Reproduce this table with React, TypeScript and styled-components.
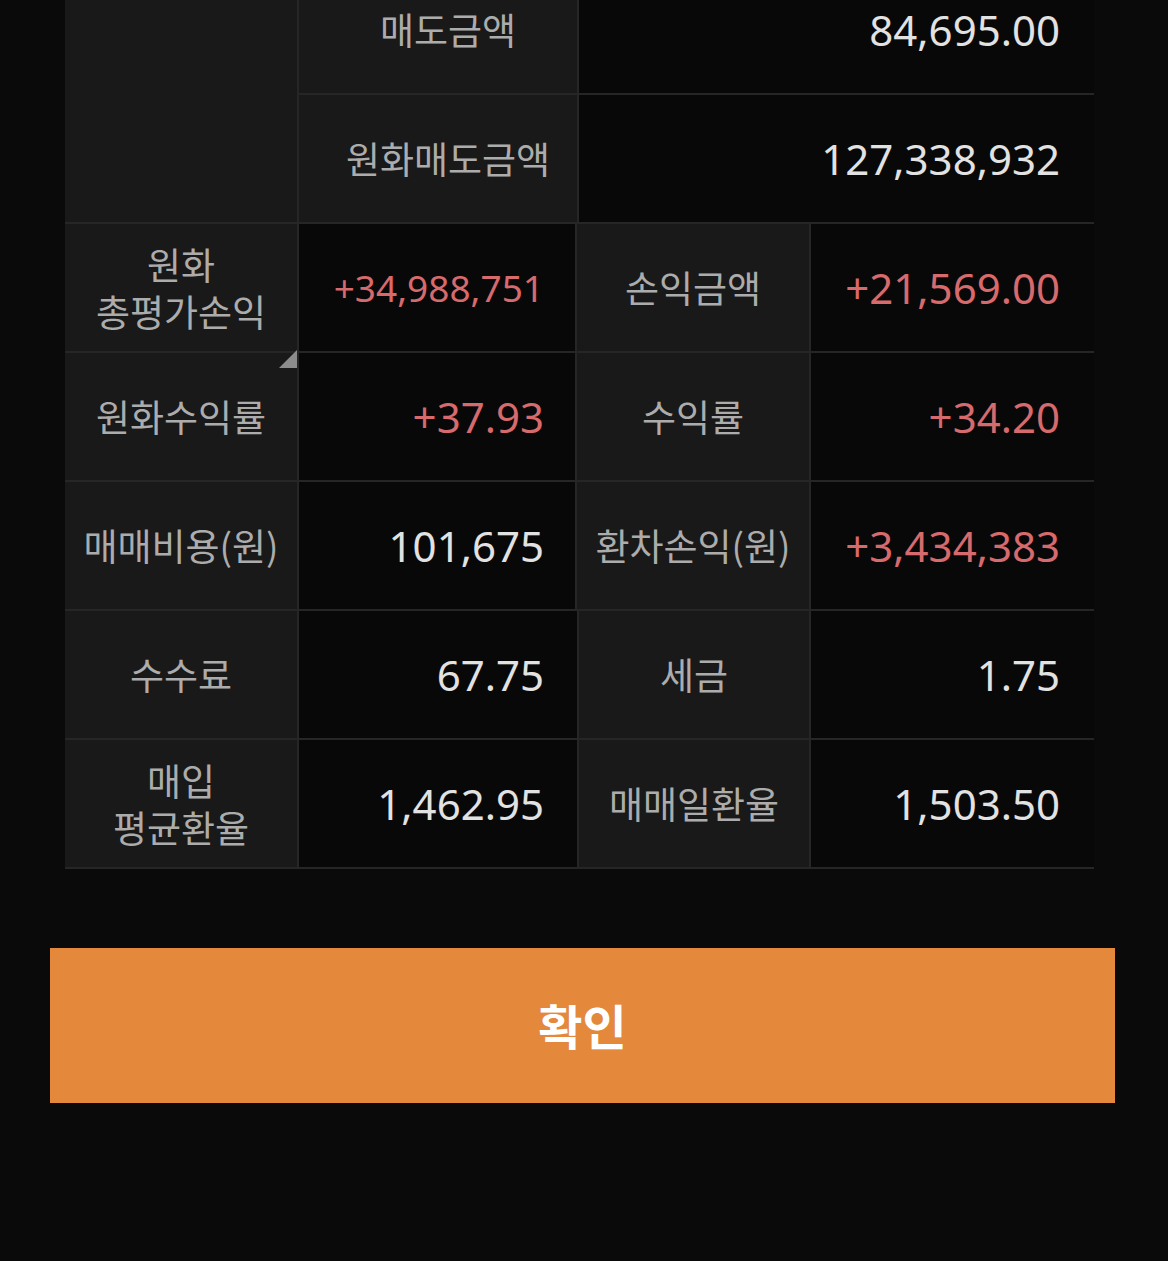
import React from "react";
import styled, { createGlobalStyle } from "styled-components";

const GlobalStyle = createGlobalStyle`
  html, body {
    margin: 0;
    padding: 0;
    background: #0a0a0a;
  }
  body {
    font-family: "Noto Sans CJK KR", "Noto Sans", sans-serif;
  }
`;

const Page = styled.div`
  width: 1168px;
  height: 1261px;
  overflow: hidden;
  background: #0a0a0a;
  display: flex;
  flex-direction: column;
`;

const Table = styled.div`
  margin: -34px 74px 0 65px;
  display: flex;
  flex-direction: column;
  gap: 2px;
  padding-bottom: 2px;
  background: #262626;
`;

const TopBlock = styled.div`
  display: grid;
  grid-template-columns: 232px 278px 1fr;
  grid-template-rows: 127px 127px;
  gap: 2px;
`;

const Row = styled.div<{ $cols: string }>`
  display: grid;
  grid-template-columns: ${(p) => p.$cols};
  height: 127px;
  gap: 2px;
`;

const Label = styled.div<{ $span?: number; $shift?: number }>`
  position: relative;
  background: #191919;
  color: #acacac;
  font-family: "Noto Sans CJK KR", sans-serif;
  font-size: 37px;
  letter-spacing: 0;
  line-height: 37px;
  display: flex;
  flex-direction: column;
  align-items: center;
  justify-content: center;
  gap: 10px;
  text-align: center;
  padding-left: ${(p) => p.$shift ?? 0}px;
  ${(p) => (p.$span ? `grid-row: span ${p.$span};` : "")}
`;

const LabelLine = styled.span`
  display: block;
  height: 37px;
  line-height: 37px;
`;

const Value = styled.div<{ $red?: boolean; $size?: number; $pr?: number }>`
  background: #080808;
  color: ${(p) => (p.$red ? "#d76a6c" : "#e2e2e2")};
  font-family: "Noto Sans", "Noto Sans CJK KR", sans-serif;
  font-size: ${(p) => p.$size ?? 42}px;
  display: flex;
  align-items: center;
  justify-content: flex-end;
  padding-right: ${(p) => p.$pr ?? 34}px;
`;

const Corner = styled.span`
  position: absolute;
  top: -3px;
  right: 0;
  width: 0;
  height: 0;
  border-style: solid;
  border-width: 0 0 18px 18px;
  border-color: transparent transparent #8c8c8c transparent;
`;

const ConfirmButton = styled.button`
  margin: 79px 53px 0 50px;
  height: 155px;
  border: none;
  background: #e4883b;
  color: #ffffff;
  font-family: "Noto Sans CJK KR", sans-serif;
  font-size: 48px;
  font-weight: 700;
  display: flex;
  align-items: center;
  justify-content: center;
  padding: 0 0 4px 0;
  cursor: pointer;
`;

const COLS_A = "232px 276px 232px 1fr";
const COLS_B = "232px 278px 230px 1fr";

export default function App() {
  return (
    <>
      <GlobalStyle />
      <Page>
        <Table>
          <TopBlock>
            <Label $span={2} />
            <Label $shift={20}>매도금액</Label>
            <Value>84,695.00</Value>
            <Label $shift={20}>원화매도금액</Label>
            <Value>127,338,932</Value>
          </TopBlock>
          <Row $cols={COLS_A}>
            <Label>
              <LabelLine>원화</LabelLine>
              <LabelLine>총평가손익</LabelLine>
            </Label>
            <Value $red $size={37} $pr={31}>
              +34,988,751
            </Value>
            <Label>손익금액</Label>
            <Value $red>+21,569.00</Value>
          </Row>
          <Row $cols={COLS_A}>
            <Label>
              <Corner />
              원화수익률
            </Label>
            <Value $red $pr={31}>
              +37.93
            </Value>
            <Label>수익률</Label>
            <Value $red>+34.20</Value>
          </Row>
          <Row $cols={COLS_A}>
            <Label>매매비용(원)</Label>
            <Value $pr={31}>101,675</Value>
            <Label>환차손익(원)</Label>
            <Value $red>+3,434,383</Value>
          </Row>
          <Row $cols={COLS_B}>
            <Label>수수료</Label>
            <Value $pr={33}>67.75</Value>
            <Label>세금</Label>
            <Value>1.75</Value>
          </Row>
          <Row $cols={COLS_B}>
            <Label>
              <LabelLine>매입</LabelLine>
              <LabelLine>평균환율</LabelLine>
            </Label>
            <Value $pr={33}>1,462.95</Value>
            <Label>매매일환율</Label>
            <Value>1,503.50</Value>
          </Row>
        </Table>
        <ConfirmButton>확인</ConfirmButton>
      </Page>
    </>
  );
}
